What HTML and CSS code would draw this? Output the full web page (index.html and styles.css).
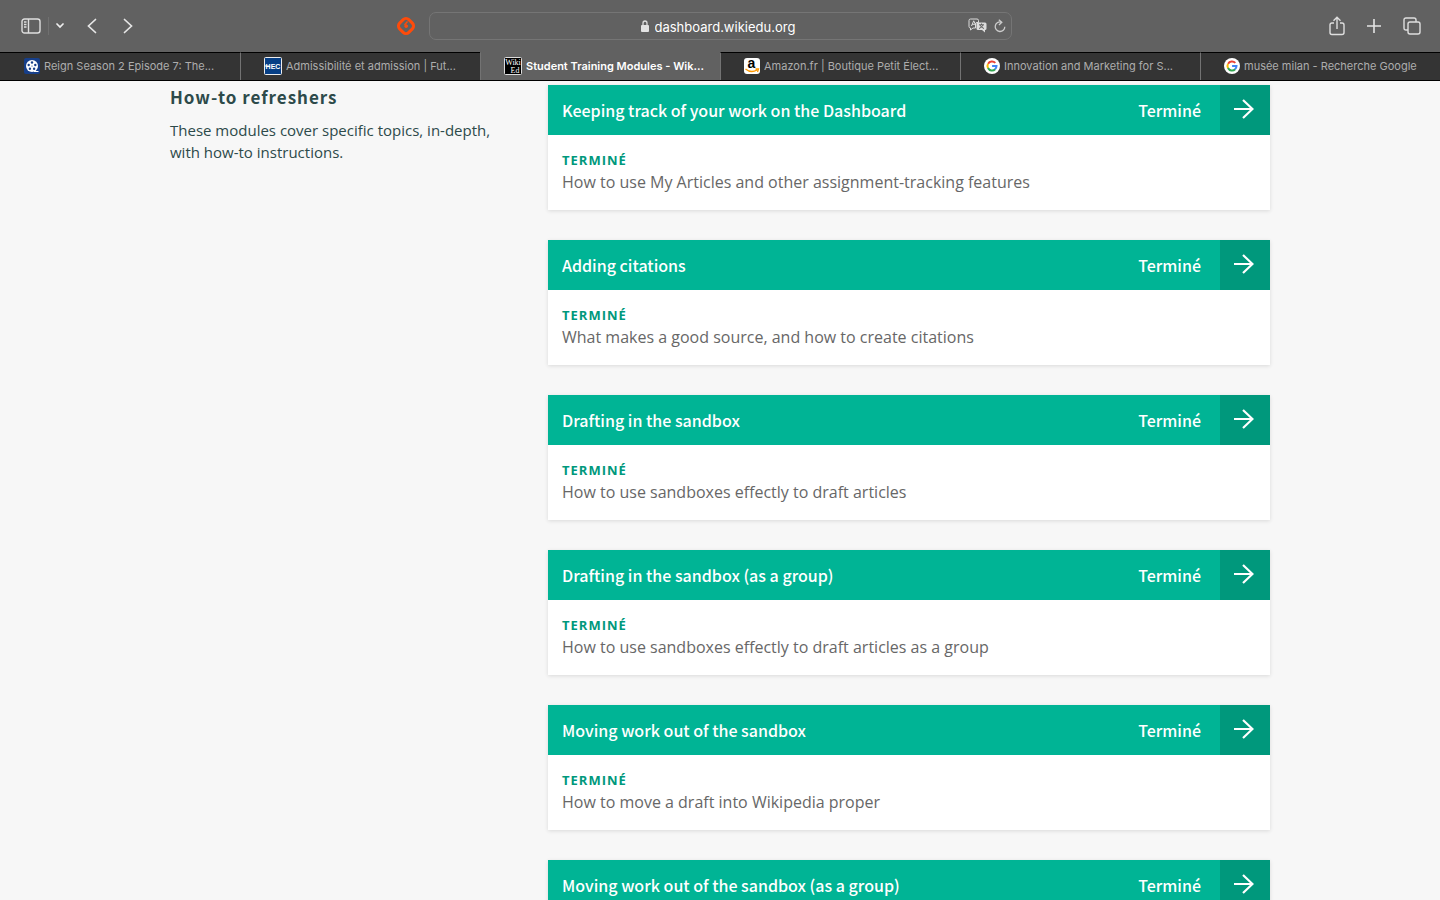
FILE: index.html
```html
<!DOCTYPE html>
<html lang="fr">
<head>
<meta charset="utf-8">
<meta name="viewport" content="width=device-width, initial-scale=1">
<title>Student Training Modules - Wiki Education Dashboard</title>
<link rel="stylesheet" href="styles.css">
</head>
<body>
<svg class="defs" width="0" height="0" aria-hidden="true">
  <symbol id="google" viewBox="0 0 16 16">
    <circle cx="8" cy="8" r="8" fill="#fff"/>
    <g fill="none" stroke-width="2">
      <path d="M4.1 5.7A4.5 4.5 0 0 1 11.3 4.9" stroke="#ea4335"/>
      <path d="M4 10.1A4.5 4.5 0 0 1 4 5.9" stroke="#fbbc05"/>
      <path d="M11.2 11.2A4.5 4.5 0 0 1 4 10" stroke="#34a853"/>
      <path d="M8.1 8H12.5A4.5 4.5 0 0 1 11 11.3" stroke="#4285f4"/>
    </g>
  </symbol>
  <symbol id="arrow" viewBox="0 0 20 20">
    <path d="M0 10H18M9 1L18.500 10L9 19" fill="none" stroke="#fff" stroke-width="2.200"/>
  </symbol>
</svg>
<header class="browser">
  <div class="toolbar">
    <div class="tools tools-start">
      <button class="tool" aria-label="Sidebar"><svg width="20" height="16" viewBox="0 0 20 16" fill="none" stroke="#dedede" stroke-width="1.400"><rect x="1" y="1" width="18" height="14" rx="2.500"/><path d="M7.500 1V15M3 4H5.500M3 6.500H5.500M3 9H5.500"/></svg></button>
      <button class="tool tool-menu" aria-label="Tab groups"><svg width="8" height="6" viewBox="0 0 8 6" fill="none" stroke="#eee" stroke-width="1.700"><path d="M1 1L4 4L7 1" stroke-linecap="round"/></svg></button>
      <button class="tool tool-back" aria-label="Back"><svg width="10" height="16" viewBox="0 0 10 16" fill="none" stroke="#e6e6e6" stroke-width="1.700"><path d="M8.500 1.500L1.500 8L8.500 14.500" stroke-linecap="round"/></svg></button>
      <button class="tool tool-next" aria-label="Forward"><svg width="10" height="16" viewBox="0 0 10 16" fill="none" stroke="#e6e6e6" stroke-width="1.700"><path d="M1.500 1.500L8.500 8L1.500 14.500" stroke-linecap="round"/></svg></button>
      <button class="tool tool-extension" aria-label="Extension"><svg width="20" height="20" viewBox="0 0 20 20" fill="none" stroke="#ff4b0a"><rect x="3.500" y="3.500" width="13" height="13" rx="4" transform="rotate(45 10 10)" stroke-width="3"/><path d="M11.500 5.500L8.500 9" stroke-width="1.400"/><circle cx="10.200" cy="10.200" r="1.400" fill="#ff4b0a"/></svg></button>
    </div>
    <form class="address">
      <div class="address-url">
        <svg width="8" height="12" viewBox="0 0 8 12"><path d="M2 6V3.200Q2 1 4 1T6 3.200V6" fill="none" stroke="#ddd" stroke-width="1.300"/><rect y="5" width="8" height="7" rx="1" fill="#e4e4e4"/></svg>
        <input type="text" value="dashboard.wikiedu.org" aria-label="Address">
      </div>
      <button type="button" class="tool" aria-label="Translate"><svg width="19" height="15" viewBox="0 0 19 15"><path d="M2.500 1H9Q10.500 1 10.500 2.500V4.500H9Q7.500 4.500 7.500 6V10H5L2.500 12V10Q1 10 1 8.500V2.500Q1 1 2.500 1Z" fill="none" stroke="#ddd"/><path d="M3.500 8L5.700 2.800L7.500 6.500M4.200 6.300H7" stroke="#ddd" fill="none"/><path d="M10 4.500H17Q18.500 4.500 18.500 6V10.500Q18.500 12 17 12V14.500L14 12H10Q8.500 12 8.500 10.500V6Q8.500 4.500 10 4.500Z" fill="#ddd"/><path d="M11 6.800H16M13.500 5.500V7M15 7Q14 9.500 11 10.500M12 7Q13 9.500 16 10.500" fill="none" stroke="#616161"/></svg></button>
      <button type="button" class="tool" aria-label="Reload"><svg width="12" height="14" viewBox="0 0 12 14" fill="none" stroke="#ccc" stroke-width="1.300"><path d="M7 3A4.800 4.800 0 1 0 10.800 7.700M4.800 .8L7.800 3.200L5 6"/></svg></button>
    </form>
    <div class="tools tools-end">
      <button class="tool" aria-label="Share"><svg width="16" height="20" viewBox="0 0 16 20" fill="none" stroke="#dedede" stroke-width="1.400"><path d="M5 7H3Q1 7 1 9V16.500Q1 18.500 3 18.500H13Q15 18.500 15 16.500V9Q15 7 13 7H11M8 13V1.500M4.500 4.700L8 1.300L11.500 4.700"/></svg></button>
      <button class="tool" aria-label="New tab"><svg width="14" height="14" viewBox="0 0 14 14" stroke="#e4e4e4" stroke-width="1.600"><path d="M7 0V14M0 7H14"/></svg></button>
      <button class="tool" aria-label="Tab overview"><svg width="18" height="18" viewBox="0 0 18 18" fill="none" stroke="#dedede" stroke-width="1.400"><rect x="5" y="5" width="12" height="12" rx="2"/><path d="M5 13H3Q1 13 1 11V3Q1 1 3 1H11Q13 1 13 3V5"/></svg></button>
    </div>
  </div>
  <nav class="tabs" aria-label="Tabs">
    <a class="tab" href="#"><svg width="16" height="16" viewBox="0 0 16 16"><rect width="16" height="16" rx="2" fill="#173f8a"/><circle cx="8" cy="8" r="6" fill="#fff"/><path d="M10 13.500H14.500" stroke="#fff"/><g fill="#173f8a"><circle cx="8" cy="4.500" r="1.200"/><circle cx="11.300" cy="7" r="1.200"/><circle cx="10.100" cy="10.800" r="1.200"/><circle cx="5.900" cy="10.800" r="1.200"/><circle cx="4.700" cy="7" r="1.200"/><circle cx="8" cy="8" r=".6"/></g></svg><span>Reign Season 2 Episode 7: The...</span></a>
    <a class="tab" href="#"><svg width="18" height="18" viewBox="0 0 18 18"><rect x=".5" y=".5" width="17" height="17" rx="1" fill="#063f86" stroke="#eee"/><path d="M1 9H5" stroke="#fff"/><text class="hec" x="9" y="12" text-anchor="middle">HEC</text></svg><span>Admissibilité et admission | Fut...</span></a>
    <a class="tab tab-active" href="#" aria-current="page"><svg width="18" height="18" viewBox="0 0 18 18"><rect x=".5" y=".5" width="17" height="17" rx="1" fill="#000" stroke="#ddd"/><text class="wiki" x="9" y="8" text-anchor="middle">Wiki</text><text class="wiki" x="11" y="16" text-anchor="middle">Ed</text></svg><span>Student Training Modules - Wik...</span></a>
    <a class="tab" href="#"><svg width="16" height="16" viewBox="0 0 16 16"><rect width="16" height="16" rx="3" fill="#fff"/><text class="amazon" x="7.500" y="10" text-anchor="middle">a</text><path d="M1.500 11Q7 15.500 13 12M11.500 11H14.500L13.500 14" fill="none" stroke="#f90" stroke-width="1.300"/></svg><span>Amazon.fr | Boutique Petit Élect...</span></a>
    <a class="tab" href="#"><svg width="16" height="16"><use href="#google"/></svg><span>Innovation and Marketing for S...</span></a>
    <a class="tab" href="#"><svg width="16" height="16"><use href="#google"/></svg><span>musée milan - Recherche Google</span></a>
  </nav>
</header>
<main class="page">
  <section class="library">
    <div class="intro">
      <h1>How-to refreshers</h1>
      <p>These modules cover specific topics, in-depth, with how-to instructions.</p>
    </div>
    <ul class="modules">
      <li><a class="module" href="#"><span class="module-head"><strong>Keeping track of your work on the Dashboard</strong><span>Terminé</span><span class="module-go"><svg width="20" height="20"><use href="#arrow"/></svg></span></span><span class="module-body"><span class="status">Terminé</span><span>How to use My Articles and other assignment-tracking features</span></span></a></li>
      <li><a class="module" href="#"><span class="module-head"><strong>Adding citations</strong><span>Terminé</span><span class="module-go"><svg width="20" height="20"><use href="#arrow"/></svg></span></span><span class="module-body"><span class="status">Terminé</span><span>What makes a good source, and how to create citations</span></span></a></li>
      <li><a class="module" href="#"><span class="module-head"><strong>Drafting in the sandbox</strong><span>Terminé</span><span class="module-go"><svg width="20" height="20"><use href="#arrow"/></svg></span></span><span class="module-body"><span class="status">Terminé</span><span>How to use sandboxes effectly to draft articles</span></span></a></li>
      <li><a class="module" href="#"><span class="module-head"><strong>Drafting in the sandbox (as a group)</strong><span>Terminé</span><span class="module-go"><svg width="20" height="20"><use href="#arrow"/></svg></span></span><span class="module-body"><span class="status">Terminé</span><span>How to use sandboxes effectly to draft articles as a group</span></span></a></li>
      <li><a class="module" href="#"><span class="module-head"><strong>Moving work out of the sandbox</strong><span>Terminé</span><span class="module-go"><svg width="20" height="20"><use href="#arrow"/></svg></span></span><span class="module-body"><span class="status">Terminé</span><span>How to move a draft into Wikipedia proper</span></span></a></li>
      <li><a class="module" href="#"><span class="module-head"><strong>Moving work out of the sandbox (as a group)</strong><span>Terminé</span><span class="module-go"><svg width="20" height="20"><use href="#arrow"/></svg></span></span></a></li>
    </ul>
  </section>
</main>
</body>
</html>
```

FILE: styles.css
```css
* { box-sizing: border-box; }

body {
  margin: 0;
  height: 100vh;
  display: flex;
  flex-direction: column;
  overflow: hidden;
  background: #f7f7f7;
  font-family: "Open Sans", "Noto Sans", sans-serif;
}

svg { display: block; flex: none; }
.defs { position: absolute; }
a { color: inherit; text-decoration: none; }

.browser {
  flex: none;
  background: #616161;
  border-bottom: 1px solid #000;
  font-family: Inter, "Liberation Sans", sans-serif;
}

.toolbar {
  display: grid;
  grid-template-columns: 1fr minmax(0, 583px) 1fr;
  align-items: center;
  height: 52px;
  padding-bottom: 1px;
}

.tools { display: flex; align-items: center; }
.tools-start { padding: 0 13px 0 21px; }
.tools-end { justify-content: flex-end; gap: 22px; padding-right: 19px; }

.tool {
  display: flex;
  padding: 0;
  border: 0;
  background: none;
}

.tool-menu {
  margin-left: 7px;
  padding: 6px 0 6px 7px;
  border-left: 1px solid #707070;
}
.tool-back { margin-left: 23px; }
.tool-next { margin-left: 26px; }
.tool-extension { margin-left: auto; }

.address {
  display: flex;
  align-items: center;
  gap: 7px;
  height: 28px;
  margin: 0;
  padding: 0 5px 0 49px;
  border: 1px solid #757575;
  border-radius: 7px;
}

.address-url {
  flex: 1;
  display: flex;
  justify-content: center;
  align-items: center;
  gap: 6px;
}

.address input {
  width: 144px;
  padding: 2px 0 0;
  border: 0;
  background: none;
  color: #fff;
  font: 400 13px/20px Inter, sans-serif;
}

.tabs {
  display: grid;
  grid-template-columns: repeat(6, minmax(0, 1fr));
}

.tab {
  display: flex;
  align-items: center;
  gap: 4px;
  height: 28px;
  padding: 0 12px 2px 23px;
  border-top: 1px solid #000;
  border-left: 1px solid #737373;
  background: #343434;
  color: #adadad;
  font-size: 11px;
  line-height: 16px;
  white-space: nowrap;
}
.tab:first-child { padding-left: 24px; border-left: 0; }
.tab span { overflow: hidden; }
.tab-active {
  border-top-color: #616161;
  background: #616161;
  color: #fff;
  font-weight: 600;
}

.hec { fill: #fff; font: 700 7px "Liberation Sans", sans-serif; }
.wiki { fill: #fff; font: 8px "Liberation Serif", serif; }
.amazon { fill: #000; font: 700 14px "Liberation Sans", sans-serif; }

.page { flex: 1; min-height: 0; overflow: hidden; }

.library {
  display: grid;
  grid-template-columns: 330px minmax(0, 1fr);
  gap: 48px;
  max-width: 1140px;
  margin: 0 auto;
  padding: 4px 20px 0;
}

.intro { color: #2d4a4a; }
.intro h1 {
  margin: 0;
  font: 700 17px/24px "Noto Sans CJK SC", "Open Sans", sans-serif;
  letter-spacing: 1px;
}
.intro p { margin: 10px 0 0; font-size: 15px; line-height: 22px; }

.modules {
  display: grid;
  gap: 30px;
  margin: 0;
  padding: 0;
  list-style: none;
}

.module { display: block; box-shadow: 0 1px 4px rgba(0, 0, 0, .12); }

.module-head {
  display: flex;
  align-items: center;
  height: 50px;
  padding-left: 14px;
  background: #00b495;
  color: #fff;
  font: 500 16px/24px "Noto Sans CJK SC", "Open Sans", sans-serif;
}
.module-head strong { flex: 1; font-weight: 500; }

.module-go {
  display: flex;
  justify-content: center;
  align-items: center;
  width: 50px;
  height: 50px;
  margin-left: 19px;
  padding: 0 2px 2px 0;
  background: #00987c;
}

.module-body {
  display: grid;
  padding: 14px 14px 17px;
  background: #fff;
  color: #676767;
  font-size: 16px;
  line-height: 22px;
}

.status {
  color: #00987c;
  font-size: 13px;
  font-weight: 700;
  letter-spacing: 1px;
  text-transform: uppercase;
}
```
